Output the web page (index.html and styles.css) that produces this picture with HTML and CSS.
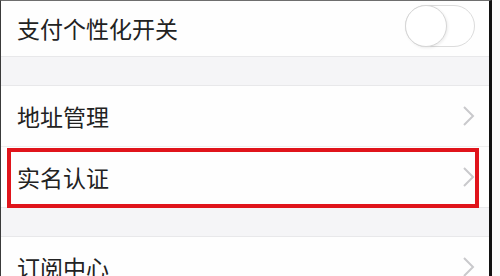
FILE: index.html
```html
<!DOCTYPE html>
<html lang="zh-CN">
<head>
<meta charset="utf-8">
<link rel="stylesheet" href="styles.css">
</head>
<body>
<div class="frame">
  <div class="screen">
    <div class="row row-first">
      <span class="label">支付个性化开关</span>
      <span class="toggle"><span class="knob"></span></span>
    </div>
    <div class="gap"></div>
    <div class="row row-tall divided">
      <span class="label">地址管理</span>
      <svg class="chev" width="14" height="22" viewBox="0 0 14 22"><path d="M2 2 L11 11 L2 20" fill="none" stroke="#c9c9cc" stroke-width="2"/></svg>
    </div>
    <div class="row row-tall highlighted">
      <span class="label">实名认证</span>
      <svg class="chev" width="14" height="22" viewBox="0 0 14 22"><path d="M2 2 L11 11 L2 20" fill="none" stroke="#c9c9cc" stroke-width="2"/></svg>
    </div>
    <div class="gap"></div>
    <div class="row row-tall">
      <span class="label">订阅中心</span>
      <svg class="chev" width="14" height="22" viewBox="0 0 14 22"><path d="M2 2 L11 11 L2 20" fill="none" stroke="#c9c9cc" stroke-width="2"/></svg>
    </div>
  </div>
</div>
</body>
</html>
```

FILE: styles.css
```css
html, body {
  margin: 0;
  padding: 0;
  background: #ffffff;
}
.frame {
  width: 500px;
  height: 276px;
  overflow: hidden;
  display: flex;
  background: #fbfbfb;
}
.screen {
  width: 488px;
  border-left: 1px solid #3a3a3a;
  border-top: 1px solid #6e6e6e;
  border-right: 3px solid #121212;
  background: #fdfdfd;
  font-family: "Noto Sans CJK SC", "Noto Sans", sans-serif;
  color: #222222;
  display: flex;
  flex-direction: column;
  flex: none;
}
.row {
  display: flex;
  align-items: center;
  justify-content: space-between;
  padding: 0 14px 0 16px;
  background: #fefefe;
  position: relative;
  flex: none;
}
.row-first {
  height: 55px;
}
.row-tall {
  height: 60px;
}
.divided {
  border-bottom: 1px solid #efefef;
}
.label {
  font-size: 23px;
  line-height: 1;
  letter-spacing: 0;
}
.gap {
  height: 28px;
  background: #f5f5f7;
  border-top: 1px solid #e8e8ea;
  border-bottom: 1px solid #e8e8ea;
  flex: none;
}
.toggle {
  width: 68px;
  height: 40px;
  border: 1px solid #dcdcdc;
  border-radius: 21px;
  background: #ffffff;
  position: relative;
  margin-bottom: 6px;
  box-sizing: content-box;
}
.knob {
  position: absolute;
  left: -1px;
  top: -1px;
  width: 40px;
  height: 40px;
  border-radius: 50%;
  border: 1px solid #d6d6d6;
  background: #ffffff;
  box-shadow: 1px 1px 3px rgba(0,0,0,0.08);
}
.chev {
  display: block;
  margin-right: -1px;
}
.highlighted::after {
  content: "";
  position: absolute;
  left: 6px;
  right: 10px;
  top: 1px;
  bottom: -1px;
  border: 4px solid #e0141b;
}
```
